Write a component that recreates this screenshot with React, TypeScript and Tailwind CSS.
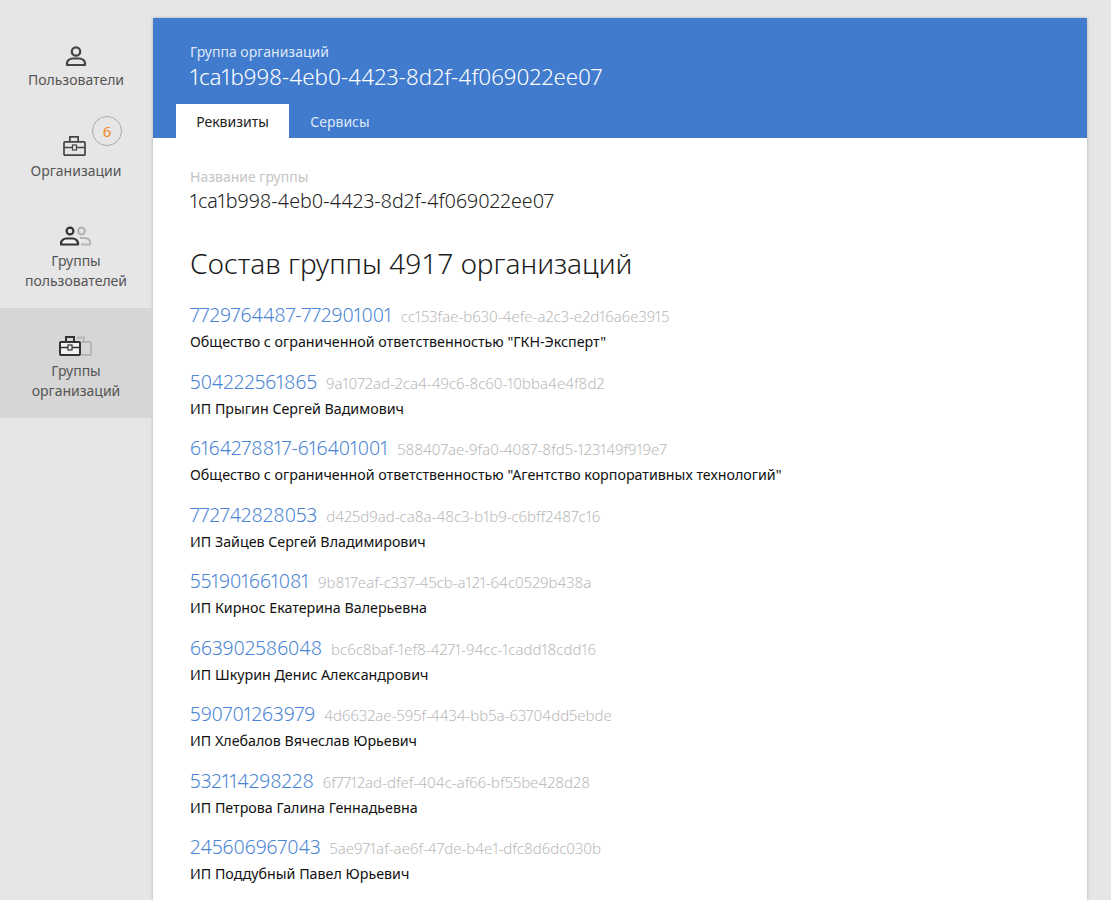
const organizations = [
  { inn: "7729764487-772901001", id: "cc153fae-b630-4efe-a2c3-e2d16a6e3915", name: 'Общество с ограниченной ответственностью "ГКН-Эксперт"' },
  { inn: "504222561865", id: "9a1072ad-2ca4-49c6-8c60-10bba4e4f8d2", name: "ИП Прыгин Сергей Вадимович" },
  { inn: "6164278817-616401001", id: "588407ae-9fa0-4087-8fd5-123149f919e7", name: 'Общество с ограниченной ответственностью "Агентство корпоративных технологий"' },
  { inn: "772742828053", id: "d425d9ad-ca8a-48c3-b1b9-c6bff2487c16", name: "ИП Зайцев Сергей Владимирович" },
  { inn: "551901661081", id: "9b817eaf-c337-45cb-a121-64c0529b438a", name: "ИП Кирнос Екатерина Валерьевна" },
  { inn: "663902586048", id: "bc6c8baf-1ef8-4271-94cc-1cadd18cdd16", name: "ИП Шкурин Денис Александрович" },
  { inn: "590701263979", id: "4d6632ae-595f-4434-bb5a-63704dd5ebde", name: "ИП Хлебалов Вячеслав Юрьевич" },
  { inn: "532114298228", id: "6f7712ad-dfef-404c-af66-bf55be428d28", name: "ИП Петрова Галина Геннадьевна" },
  { inn: "245606967043", id: "5ae971af-ae6f-47de-b4e1-dfc8d6dc030b", name: "ИП Поддубный Павел Юрьевич" },
];

function PersonIcon() {
  return (
    <svg width="24" height="22" viewBox="0 0 24 22" fill="none" stroke="#444" strokeWidth="2.200">
      <circle cx="12" cy="6.500" r="4.200" />
      <path d="M3 20v-2c0-2.500 3-4.500 5.500-4.500h7c2.500 0 5.500 2 5.500 4.500v2z" strokeLinejoin="round" />
    </svg>
  );
}

function CaseIcon() {
  return (
    <svg width="26" height="22" viewBox="0 0 26 22" fill="none" stroke="#444" strokeWidth="1.700">
      <rect x="1" y="6.850" width="21" height="13.300" rx="1" />
      <path d="M6.850 7V1.850h8.300V7" />
      <path d="M1 12.500h8M14 12.500h8" strokeWidth="1.300" />
      <rect x="9.500" y="10" width="4" height="5" strokeWidth="1.200" />
    </svg>
  );
}

function PeopleIcon() {
  return (
    <svg width="32" height="22" viewBox="0 0 32 22" fill="none" strokeWidth="2.200">
      <circle cx="21.500" cy="6" r="3.400" stroke="#b5b5b5" />
      <path d="M20 13h4c3 0 6 1.500 6 4v2.500h-9" stroke="#b5b5b5" strokeLinejoin="round" />
      <circle cx="10" cy="6" r="3.400" stroke="#333" />
      <path d="M1 19.500V18c0-2.500 3-4.500 5-4.500h7c2 0 5 2 5 4.500v1.500z" stroke="#333" fill="#f2f2f2" strokeLinejoin="round" />
    </svg>
  );
}

function CasesIcon() {
  return (
    <svg width="34" height="22" viewBox="0 0 34 22" fill="none" strokeWidth="2">
      <path d="M22 7h9a1 1 0 0 1 1 1v11a1 1 0 0 1-1 1h-9" stroke="#b5b5b5" />
      <path d="M19 4V2.500h6V7" stroke="#b5b5b5" />
      <rect x="1" y="7" width="20" height="13" rx="1" stroke="#333" fill="#f2f2f2" />
      <path d="M7 7V2h8v5" stroke="#333" />
      <path d="M1 12.500h8M13 12.500h8" stroke="#333" strokeWidth="1.300" />
      <rect x="9" y="10" width="4" height="5" stroke="#333" strokeWidth="1.200" />
    </svg>
  );
}

function NavItem({ icon, label, active, badge, labelGap = "mt-[4px]" }: { icon: React.ReactNode; label: string[]; active?: boolean; badge?: string; labelGap?: string }) {
  return (
    <div className={`relative flex flex-col items-center pt-[27px] ${active ? "bg-[#d6d6d6]" : ""} ${label.length > 1 ? "h-[110px]" : "h-[90px]"}`}>
      <div className="flex h-[22px] items-center justify-center">{icon}</div>
      <div className={`${labelGap} text-center text-[14px] leading-[20px] text-[#555]`}>
        {label.map((line) => (
          <div key={line}>{line}</div>
        ))}
      </div>
      {badge && (
        <span className="absolute top-[8px] left-[92px] flex h-[30px] w-[30px] items-center justify-center rounded-full border border-[#aaa] text-[15px] text-[#f08a1d]">
          {badge}
        </span>
      )}
    </div>
  );
}

export default function App() {
  return (
    <div className="flex h-[900px] overflow-hidden bg-[#e6e6e6] font-['Noto_Sans',sans-serif]">
      <aside className="w-[152px] shrink-0 pt-[18px]">
        <NavItem icon={<PersonIcon />} label={["Пользователи"]} labelGap="mt-[3px]" />
        <NavItem icon={<CaseIcon />} label={["Организации"]} badge="6" />
        <NavItem icon={<PeopleIcon />} label={["Группы", "пользователей"]} />
        <NavItem icon={<CasesIcon />} label={["Группы", "организаций"]} active />
      </aside>

      <main className="mt-[18px] ml-px mr-[24px] flex-1 bg-white shadow-[0_0_3px_rgba(0,0,0,0.25)]">
        <header className="h-[120px] bg-[#417bcd] text-white">
          <div className="px-[37px] pt-[25px]">
            <div className="text-[14px] leading-[18px] text-[#dce7f6]">Группа организаций</div>
            <div className="mt-[2px] text-[22.300px] font-light leading-[28px] proportional-nums">1ca1b998-4eb0-4423-8d2f-4f069022ee07</div>
          </div>
          <div className="mt-[13px] flex pl-[23px] text-[14px]">
            <div className="flex h-[34px] w-[113px] items-center justify-center bg-white text-[#222]">Реквизиты</div>
            <div className="flex h-[34px] w-[102px] items-center justify-center text-[#dce7f6]">Сервисы</div>
          </div>
        </header>

        <section className="px-[37px] pt-[30px]">
          <div className="text-[14px] leading-[18px] text-[#c4c4c4]">Название группы</div>
          <div className="mt-[2px] text-[19.700px] font-light leading-[26px] text-[#222] proportional-nums">1ca1b998-4eb0-4423-8d2f-4f069022ee07</div>

          <h1 className="mt-[29px] text-[28.100px] font-light leading-[40px] text-[#1c1c1c]">Состав группы 4917 организаций</h1>

          <ul className="mt-[17px] flex flex-col">
            {organizations.map((org) => (
              <li key={org.id} className="h-[66.500px]">
                <div className="flex items-baseline gap-[9px] leading-[30px] proportional-nums">
                  <span className="text-[19.400px] font-light text-[#4a84d4]">{org.inn}</span>
                  <span className="text-[15px] font-light text-[#b8b8b8]">{org.id}</span>
                </div>
                <div className="mt-px text-[14.250px] leading-[20px] text-[#111]">{org.name}</div>
              </li>
            ))}
          </ul>
        </section>
      </main>
    </div>
  );
}
